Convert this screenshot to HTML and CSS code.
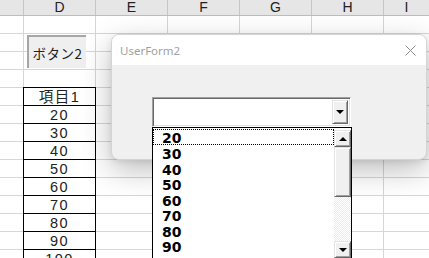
FILE: index.html
```html
<!DOCTYPE html>
<html lang="ja">
<head>
<meta charset="utf-8">
<title>UserForm2</title>
<link rel="stylesheet" href="styles.css">
</head>
<body>
<div class="sheet">
  <div class="colhead">
    <div class="ch ch-first"></div>
    <div class="ch">D</div>
    <div class="ch">E</div>
    <div class="ch">F</div>
    <div class="ch">G</div>
    <div class="ch">H</div>
    <div class="ch ch-last">I</div>
  </div>
  <div class="cells">
    <div class="datatable">
      <div class="dcell">項目1</div>
      <div class="dcell">20</div>
      <div class="dcell">30</div>
      <div class="dcell">40</div>
      <div class="dcell">50</div>
      <div class="dcell">60</div>
      <div class="dcell">70</div>
      <div class="dcell">80</div>
      <div class="dcell">90</div>
      <div class="dcell">100</div>
    </div>
    <div class="sheetbtn">ボタン2</div>
  </div>
</div>

<div class="userform">
  <div class="titlebar">
    <span class="title">UserForm2</span>
    <svg class="closex" width="11" height="11" viewBox="0 0 11 11"><path d="M0.5 0.5 L10.5 10.5 M10.5 0.5 L0.5 10.5" stroke="#8a8a8a" stroke-width="1" fill="none"/></svg>
  </div>
  <div class="formbody">
    <div class="combo">
      <div class="combotext"></div>
      <div class="dropbtn"><span class="arrow-down"></span></div>
    </div>
  </div>
</div>

<div class="droplist">
  <div class="items">
    <div class="item focus">20</div>
    <div class="item">30</div>
    <div class="item">40</div>
    <div class="item">50</div>
    <div class="item">60</div>
    <div class="item">70</div>
    <div class="item">80</div>
    <div class="item">90</div>
  </div>
  <div class="scrollbar">
    <div class="sbtn"><span class="arrow-up"></span></div>
    <div class="thumb"></div>
    <div class="track"></div>
    <div class="sbtn"><span class="arrow-down"></span></div>
  </div>
</div>
</body>
</html>
```
FILE: styles.css
```css
html, body {
  margin: 0;
  padding: 0;
}
body {
  width: 429px;
  height: 258px;
  overflow: hidden;
  background: #ffffff;
  font-family: "Liberation Sans", "Noto Sans CJK JP", sans-serif;
  position: relative;
}

.sheet {
  width: 429px;
  height: 258px;
}

.colhead {
  display: flex;
  height: 15px;
  background: #e6e6e6;
  border-bottom: 1px solid #bdbdbd;
}
.ch {
  width: 71px;
  flex: none;
  border-right: 1px solid #c6c6c6;
  text-align: center;
  font-size: 14px;
  line-height: 15px;
  color: #222;
}
.ch-first { width: 23px; }
.ch-last { flex: 1; border-right: none; }

.cells {
  position: relative;
  height: 242px;
  background-image:
    linear-gradient(to bottom, transparent 17px, #d6d6d6 17px),
    linear-gradient(to right, transparent 71px, #d6d6d6 71px);
  background-size: 100% 18px, 72px 100%;
  background-position: 0 0, -48px 0;
  padding-top: 71px;
  padding-left: 23px;
  box-sizing: border-box;
}

.datatable {
  width: 71px;
  border-left: 1px solid #000;
  border-right: 1px solid #000;
  background: #fff;
}
.dcell {
  height: 17px;
  border-top: 1px solid #000;
  text-align: center;
  font-size: 14.5px;
  line-height: 18px;
  letter-spacing: 1.5px;
  color: #222;
}

.sheetbtn {
  position: absolute;
  left: 27px;
  top: 19px;
  width: 57px;
  height: 31px;
  background: #efefef;
  border-top: 2px solid #a6a6a6;
  border-left: 2px solid #a6a6a6;
  display: flex;
  align-items: center;
  justify-content: center;
  font-family: "Noto Sans CJK JP", sans-serif;
  font-size: 13.5px;
  color: #222;
  letter-spacing: 0.5px;
}

.userform {
  position: absolute;
  left: 111px;
  top: 34px;
  width: 314px;
  height: 124px;
  border: 1px solid #d4d4d4;
  border-radius: 8px;
  background: #f0f0f0;
  box-shadow: 0 10px 30px rgba(0, 0, 0, 0.26), 0 2px 6px rgba(0, 0, 0, 0.08);
  overflow: hidden;
}
.titlebar {
  height: 30px;
  background: #ffffff;
  display: flex;
  align-items: center;
  justify-content: space-between;
  padding: 0 10px 0 8px;
}
.title {
  font-family: "Noto Sans", "Open Sans", sans-serif;
  font-size: 11.5px;
  color: #a0a0a0;
}
.closex {
  display: block;
}
.formbody {
  padding-top: 32px;
  padding-left: 40px;
}
.combo {
  width: 199px;
  height: 30px;
  box-sizing: border-box;
  border-top: 1px solid #a0a0a0;
  border-left: 1px solid #a0a0a0;
  border-right: 1px solid #ffffff;
  border-bottom: 1px solid #ffffff;
  box-shadow: inset 1px 1px 0 #696969, inset -1px -1px 0 #e3e3e3;
  background: #fff;
  display: flex;
  padding: 2px 2px 2px 2px;
}
.combotext { flex: 1; }
.dropbtn {
  width: 16px;
  box-sizing: border-box;
  background: #f0f0f0;
  border-top: 1px solid #e3e3e3;
  border-left: 1px solid #e3e3e3;
  border-right: 1px solid #696969;
  border-bottom: 1px solid #696969;
  box-shadow: inset 1px 1px 0 #ffffff, inset -1px -1px 0 #a0a0a0;
  display: flex;
  align-items: center;
  justify-content: center;
}
.arrow-down {
  width: 0;
  height: 0;
  border-left: 4px solid transparent;
  border-right: 4px solid transparent;
  border-top: 4px solid #000;
}
.arrow-up {
  width: 0;
  height: 0;
  border-left: 4px solid transparent;
  border-right: 4px solid transparent;
  border-bottom: 4px solid #000;
}

.droplist {
  position: absolute;
  left: 152px;
  top: 127px;
  width: 198px;
  height: 140px;
  border: 1px solid #000;
  background: #fff;
  display: flex;
}
.items {
  width: 181px;
  padding-top: 1px;
}
.item {
  height: 15.5px;
  line-height: 19px;
  padding-left: 9px;
  font-family: "DejaVu Sans", sans-serif;
  font-weight: bold;
  font-size: 14px;
  color: #000;
}
.item.focus {
  outline: 1px dotted #000;
  outline-offset: -1px;
  height: 16px;
}
.scrollbar {
  width: 17px;
  display: flex;
  flex-direction: column;
  padding-top: 2px;
}
.sbtn {
  height: 17px;
  flex: none;
  box-sizing: border-box;
  background: #f0f0f0;
  border-top: 1px solid #e3e3e3;
  border-left: 1px solid #e3e3e3;
  border-right: 1px solid #696969;
  border-bottom: 1px solid #696969;
  box-shadow: inset 1px 1px 0 #ffffff, inset -1px -1px 0 #a0a0a0;
  display: flex;
  align-items: center;
  justify-content: center;
}
.thumb {
  height: 50px;
  flex: none;
  box-sizing: border-box;
  background: #f0f0f0;
  border-top: 1px solid #e3e3e3;
  border-left: 1px solid #e3e3e3;
  border-right: 1px solid #696969;
  border-bottom: 1px solid #696969;
  box-shadow: inset 1px 1px 0 #ffffff, inset -1px -1px 0 #a0a0a0;
}
.track {
  height: 44px;
  flex: none;
  background: repeating-conic-gradient(#ffffff 0 25%, #ececec 0 50%) 0 0 / 2px 2px;
}
```
